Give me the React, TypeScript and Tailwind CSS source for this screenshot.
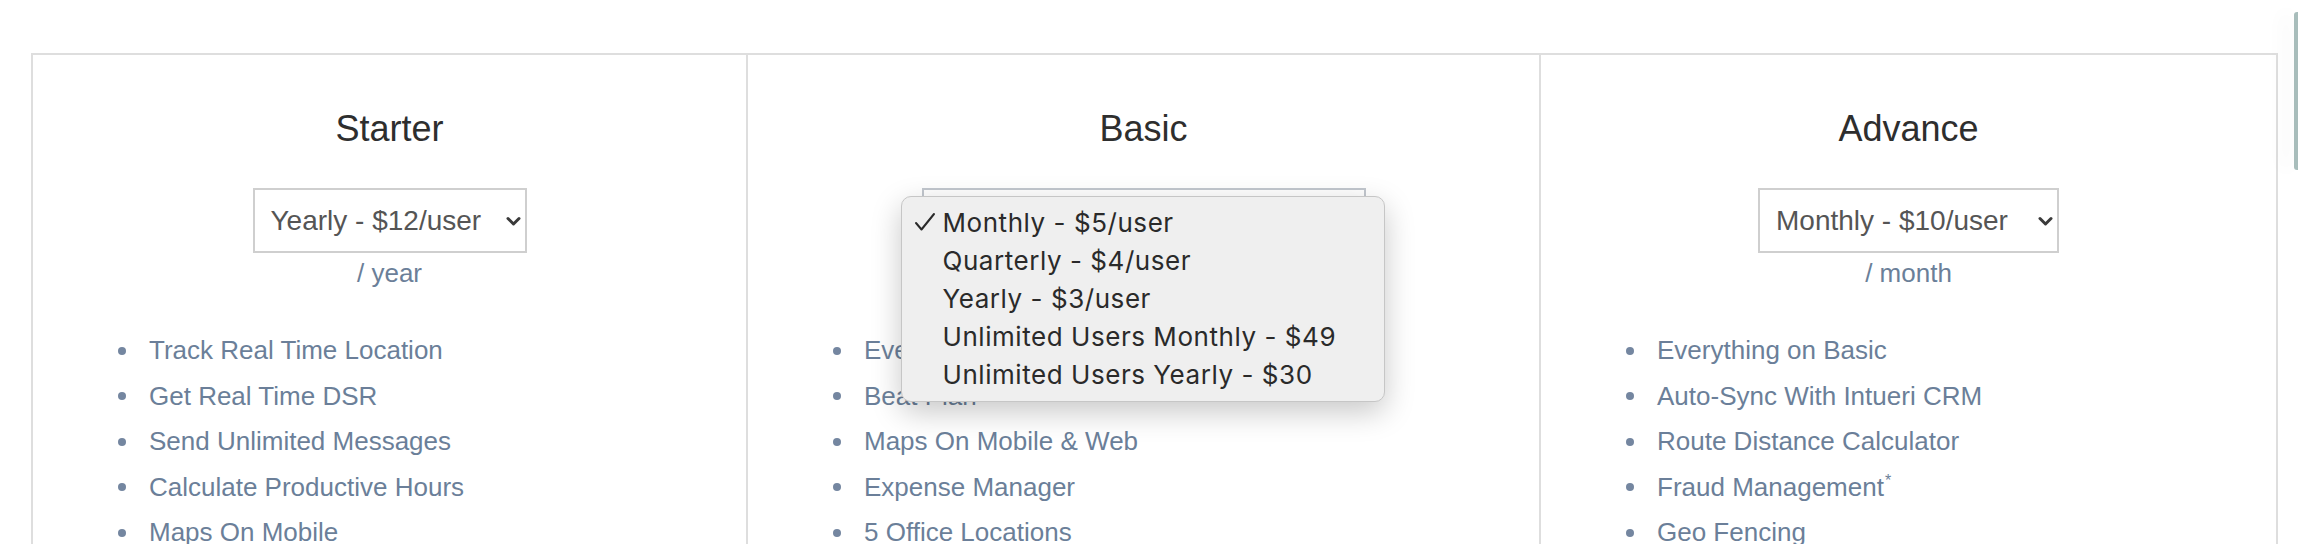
import React from 'react'

interface Plan {
  name: string
  colClass: string
  price: string
  selectClass: string
  period: string
  features: string[]
  open?: boolean
}

const plans: Plan[] = [
  {
    name: 'Starter',
    colClass: 'w-[713px]',
    price: 'Yearly - $12/user',
    selectClass: 'w-[274px] border-[#cfcfcf]',
    period: '/ year',
    features: ['Track Real Time Location', 'Get Real Time DSR', 'Send Unlimited Messages', 'Calculate Productive Hours', 'Maps On Mobile'],
  },
  {
    name: 'Basic',
    colClass: 'w-[793px] border-l-2 border-[#dedede]',
    price: 'Monthly - $5/user',
    selectClass: 'w-[444px] border-[#c2c7ce]',
    period: '/ month',
    features: ['Everything on Basic', 'Beat Plan', 'Maps On Mobile & Web', 'Expense Manager', '5 Office Locations'],
    open: true,
  },
  {
    name: 'Advance',
    colClass: 'w-[737px] border-l-2 border-[#dedede]',
    price: 'Monthly - $10/user',
    selectClass: 'w-[301px] border-[#cfcfcf]',
    period: '/ month',
    features: ['Everything on Basic', 'Auto-Sync With Intueri CRM', 'Route Distance Calculator', 'Fraud Management', 'Geo Fencing'],
  },
]

const menuOptions = [
  'Monthly - $5/user',
  'Quarterly - $4/user',
  'Yearly - $3/user',
  'Unlimited Users Monthly - $49',
  'Unlimited Users Yearly - $30',
]

function Chevron(): React.ReactElement {
  return (
    <svg width="15" height="10" viewBox="0 0 15 10" fill="none" aria-hidden="true">
      <path d="M2 2.5 7.5 8 13 2.5" stroke="#3a3a3a" strokeWidth="3" strokeLinecap="round" strokeLinejoin="round" />
    </svg>
  )
}

/** Native-looking macOS option menu, shown open over the Basic select. */
function OptionMenu(): React.ReactElement {
  return (
    <div className="absolute left-[-21px] top-[8px] w-[484px] h-[206px] rounded-[10px] bg-[#efefef] border border-[#c6c6c6] shadow-[0_10px_30px_rgba(0,0,0,0.22)] pt-[6px] z-10 font-['Inter',sans-serif] text-[26px] tracking-[0.55px] text-[#2a2a2a]">
      {menuOptions.map((opt, i) => (
        <div key={opt} className="relative h-[38px] flex items-center pl-[41px] whitespace-nowrap">
          {i === 0 && (
            <svg className="absolute left-[12px] top-[9px]" width="22" height="20" viewBox="0 0 22 20" fill="none" aria-hidden="true">
              <path d="M2 11 7.5 17.5 20 2" stroke="#2a2a2a" strokeWidth="2" strokeLinecap="round" strokeLinejoin="round" />
            </svg>
          )}
          {opt}
        </div>
      ))}
    </div>
  )
}

function PlanColumn({ plan }: { plan: Plan }): React.ReactElement {
  return (
    <div className={`${plan.colClass} flex flex-col items-center pt-[54px]`}>
      <h2 className="text-[36px] leading-[40px] text-[#2e2e2e]">{plan.name}</h2>
      <div className="relative mt-[39px]">
        <div className={`${plan.selectClass} h-[65px] border-2 bg-white flex items-center justify-between pl-[16px] pr-[4px] text-[28px] text-[#555]`}>
          <span>{plan.price}</span>
          <Chevron />
        </div>
        {plan.open && <OptionMenu />}
      </div>
      <div className="mt-[5px] text-[26px] leading-[30px] text-[#6b7f99]">{plan.period}</div>
      <ul className="self-stretch mt-[40px] pl-[85px]">
        {plan.features.map((f) => (
          <li key={f} className="flex items-center text-[26px] leading-[45.5px] text-[#6b7f99] whitespace-nowrap">
            <span className="w-[8px] h-[8px] rounded-full bg-[#7486a0] mr-[23px] shrink-0" />
            {f}
            {f === 'Fraud Management' && <sup className="text-[16px] ml-[1px] relative top-[-6px]">*</sup>}
          </li>
        ))}
      </ul>
    </div>
  )
}

export default function App(): React.ReactElement {
  return (
    <div className="relative w-[2298px] h-[544px] overflow-hidden bg-white font-['Liberation_Sans',Arial,sans-serif]">
      <div className="ml-[31px] mt-[53px] flex w-fit border-2 border-[#dedede]">
        {plans.map((p) => (
          <PlanColumn key={p.name} plan={p} />
        ))}
      </div>
      {/* edge of a floating widget peeking in at the right */}
      <div className="absolute right-0 top-[12px] w-[4px] h-[158px] rounded-l-[3px] bg-[#a8bdbb] shadow-[-10px_0_18px_rgba(0,0,0,0.07)]" />
    </div>
  )
}
